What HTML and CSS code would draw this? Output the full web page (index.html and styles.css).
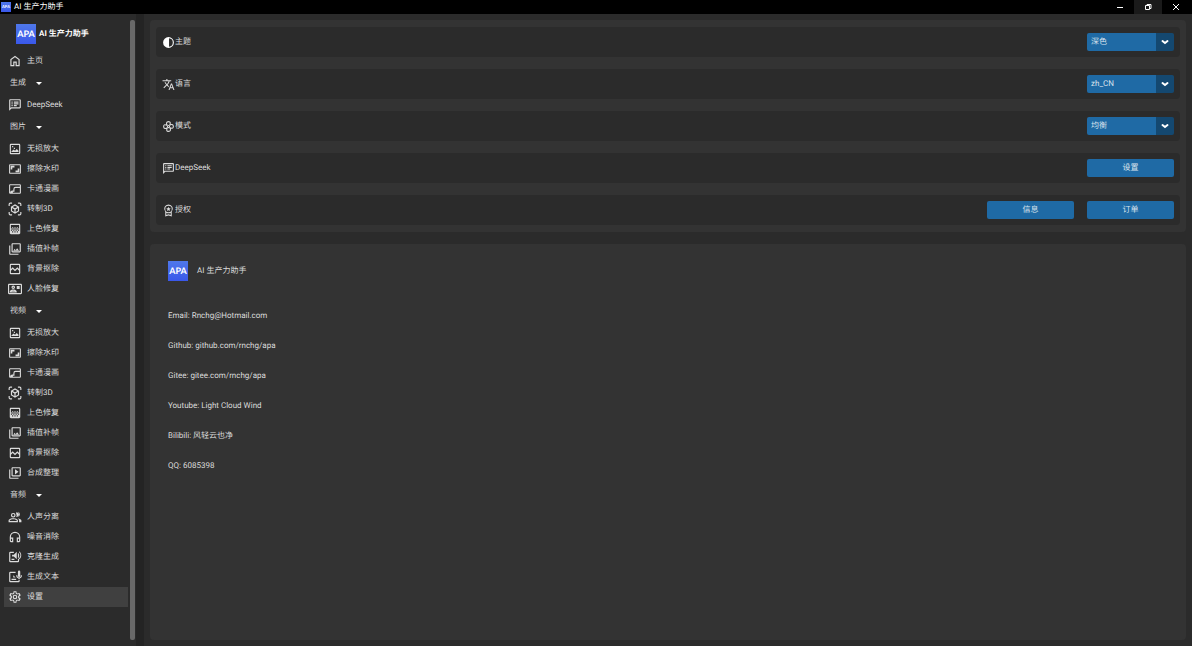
FILE: index.html
```html
<!DOCTYPE html>
<html lang="zh-CN">
<head>
    <meta charset="UTF-8">
    <meta name="viewport" content="width=device-width, initial-scale=1.0">
    <title>AI 生产力助手</title>
    <link rel="stylesheet" href="styles.css">
</head>
<body>
    <svg class="sprite" aria-hidden="true">
        <symbol id="i-home" viewBox="0 0 24 24"><path d="M6 19h3v-6h6v6h3v-9l-6-4.500L6 10v9zm-2 2V9l8-6 8 6v12h-7v-6h-2v6H4z"/></symbol>
        <symbol id="i-chat" viewBox="0 0 24 24"><path d="M4 4h16v12H5.170L4 17.170V4m0-2c-1.100 0-1.990.9-1.990 2L2 22l4-4h14c1.100 0 2-.9 2-2V4c0-1.100-.9-2-2-2H4zm2 10h2v2H6v-2zm0-3h2v2H6V9zm0-3h2v2H6V6zm4 6h5v2h-5v-2zm0-3h8v2h-8V9zm0-3h8v2h-8V6z"/></symbol>
        <symbol id="i-image" viewBox="0 0 24 24"><path d="M19 5v14H5V5h14m0-2H5a2 2 0 0 0-2 2v14a2 2 0 0 0 2 2h14a2 2 0 0 0 2-2V5a2 2 0 0 0-2-2zM6 17h12v-2l-3-3-3 3-2-2-4 3zM7 7h2v2H7zm3 3h2v2h-2z"/></symbol>
        <symbol id="i-aspect" viewBox="-1 -1 26 26"><path d="M20 11h-3v4h-4v3h7zM7 9h4V6H4v7h3V9zm14-6H3c-1.100 0-2 .9-2 2v14c0 1.100.9 2 2 2h18c1.100 0 2-.9 2-2V5c0-1.100-.9-2-2-2zm0 16H3V5h18v14z"/></symbol>
        <symbol id="i-curve" viewBox="-1 -1 26 26"><path d="M21 3H3a2 2 0 0 0-2 2v14a2 2 0 0 0 2 2h18a2 2 0 0 0 2-2V5a2 2 0 0 0-2-2zM3 19V5h18v3h-8a4 4 0 0 0-4 4v3H7a4 4 0 0 0-4 4zm18 0H8v-2h3v-5a2 2 0 0 1 2-2h8v9z"/></symbol>
        <symbol id="i-cube" viewBox="0 0 24 24"><path d="M3 7V4a1 1 0 0 1 1-1h3V1H4a3 3 0 0 0-3 3v3zM17 3h3a1 1 0 0 1 1 1v3h2V4a3 3 0 0 0-3-3h-3zM7 21H4a1 1 0 0 1-1-1v-3H1v3a3 3 0 0 0 3 3h3zM21 17v3a1 1 0 0 1-1 1h-3v2h3a3 3 0 0 0 3-3v-3zM19 8l-7-4-7 4v8l7 4 7-4zm-7-1.700 4 2.300-4 2.300-4-2.300zm-5 4.100 4 2.300v4.500l-4-2.300zm6 6.800v-4.500l4-2.300v4.500z"/></symbol>
        <symbol id="i-gradient" viewBox="0 0 24 24"><path d="M11 9h2v2h-2zm-2 2h2v2H9zm4 0h2v2h-2zm2-2h2v2h-2zM7 9h2v2H7zm12-6H5c-1.100 0-2 .9-2 2v14c0 1.100.9 2 2 2h14c1.100 0 2-.9 2-2V5c0-1.100-.9-2-2-2zM9 18H7v-2h2v2zm4 0h-2v-2h2v2zm4 0h-2v-2h2v2zm2-7h-2v2h2v2h-2v-2h-2v2h-2v-2h-2v2H9v-2H7v2H5v-2h2v-2H5V5h14v6z"/></symbol>
        <symbol id="i-library" viewBox="0 0 24 24"><path d="M20 4v12H8V4h12m0-2H8c-1.100 0-2 .9-2 2v12c0 1.100.9 2 2 2h12c1.100 0 2-.9 2-2V4c0-1.100-.9-2-2-2zm-8.500 9.670 1.690 2.260 2.480-3.100L19 15H9zM2 6v14c0 1.100.9 2 2 2h14v-2H4V6H2z"/></symbol>
        <symbol id="i-cutout" viewBox="0 0 24 24"><path d="M19 3H5a2 2 0 0 0-2 2v14a2 2 0 0 0 2 2h14a2 2 0 0 0 2-2V5a2 2 0 0 0-2-2zm0 16H5v-4l3-3 4 4 4-4 3 3v4zm0-7-3-3-4 4-4-4-3 3V5h14v7z"/></symbol>
        <symbol id="i-face" viewBox="0 0 24 24"><path d="M22 3H2C.9 3 0 3.900 0 5v14c0 1.100.9 2 2 2h20c1.100 0 2-.9 2-2V5c0-1.100-.9-2-2-2zm0 16H2V5h20v14zM9 12c1.700 0 3-1.300 3-3S10.700 6 9 6 6 7.300 6 9s1.300 3 3 3zm0-4a1 1 0 1 1 0 2 1 1 0 0 1 0-2zm6 8.600c0-2.500-4-3.600-6-3.600s-6 1.100-6 3.600V18h12v-1.400zM5.500 16c.7-.6 2.200-1 3.500-1s2.800.4 3.500 1h-7zM15 7h5v5h-5z"/></symbol>
        <symbol id="i-video" viewBox="0 0 24 24"><path d="M4 6H2v14c0 1.100.9 2 2 2h14v-2H4V6zm16-4H8c-1.100 0-2 .9-2 2v12c0 1.100.9 2 2 2h12c1.100 0 2-.9 2-2V4c0-1.100-.9-2-2-2zm0 14H8V4h12v12zM12 5.500v9l6-4.500z"/></symbol>
        <symbol id="i-voices" viewBox="0 0 24 24"><path d="M9 5a4 4 0 1 0 0 8 4 4 0 0 0 0-8zm0 2a2 2 0 1 1 0 4 2 2 0 0 1 0-4zm0 7c-3 0-8 1.300-8 4v3h16v-3c0-2.700-5-4-8-4zm-6 5v-1c0-.7 3-2 6-2s6 1.300 6 2v1zM14 4a4 4 0 0 1 0 8l1-3-1-2zM17 14c3 1 6 2 6 4v3h-4v-3c0-2-1-3-2-4zM18 3c3 2 3 7 0 9z"/></symbol>
        <symbol id="i-headphones" viewBox="0 0 24 24"><path d="M12 3a9 9 0 0 0-9 9v7c0 1.100.9 2 2 2h4v-8H5v-1a7 7 0 0 1 14 0v1h-4v8h4c1.100 0 2-.9 2-2v-7a9 9 0 0 0-9-9zM7 15v4H5v-4h2zm12 4h-2v-4h2v4z"/></symbol>
        <symbol id="i-clone" viewBox="0 0 24 24"><path d="M10 3H4a2 2 0 0 0-2 2v14a2 2 0 0 0 2 2h13a2 2 0 0 0 2-2v-4h-2v4H4V5h6zM7 8h3l5-5v13l-5-5H7zM17 5c3 1 3 8 0 9zM19 2c5 3 5 11 0 14v-2c3-2 3-8 0-10zM6 15h5v2H6z"/></symbol>
        <symbol id="i-note" viewBox="0 0 24 24"><path d="M13 3H4a2 2 0 0 0-2 2v14a2 2 0 0 0 2 2h14a2 2 0 0 0 2-2v-3h-2v3H4V5h9zM17 3a2 2 0 0 1 4 0v7a2 2 0 0 1-4 0zM14 9h2c0 5 6 5 6 0h2c0 3-2 5-4 5.500V17h-2v-2.500C16 14 14 12 14 9zM6 15h8v2H6zM9 9l4 4H9z"/></symbol>
        <symbol id="i-gear" viewBox="0 0 24 24"><path d="M19.430 12.980c.04-.32.07-.64.07-.98s-.03-.66-.07-.98l2.110-1.650c.19-.15.24-.42.12-.64l-2-3.460c-.09-.16-.26-.25-.44-.25-.06 0-.12.010-.17.030l-2.490 1c-.52-.4-1.080-.73-1.690-.98l-.38-2.650C14.460 2.180 14.250 2 14 2h-4c-.25 0-.46.18-.49.42l-.38 2.650c-.61.25-1.170.59-1.690.98l-2.490-1c-.23-.09-.48 0-.61.22l-2 3.460c-.13.22-.07.49.12.64l2.110 1.650c-.04.32-.07.65-.07.98s.03.66.07.98l-2.110 1.650c-.19.15-.24.42-.12.64l2 3.460c.12.22.39.3.61.22l2.490-1c.52.4 1.080.73 1.690.98l.38 2.650c.03.24.24.42.49.42h4c.25 0 .46-.18.49-.42l.38-2.650c.61-.25 1.170-.59 1.690-.98l2.490 1c.23.09.48 0 .61-.22l2-3.460c.12-.22.07-.49-.12-.64l-2.110-1.650zM17.300 13.500l1.700 2-1 1.600-2.500-.9-2 1.300-.5 2.500h-2l-.5-2.500-2-1.300-2.500.9-1-1.600 1.700-2v-3L5 8.500l1-1.600 2.500.9 2-1.300L11 4h2l.5 2.500 2 1.300 2.500-.9 1 1.600-1.700 2zM12 8a4 4 0 1 0 0 8 4 4 0 0 0 0-8zm0 6a2 2 0 1 1 0-4 2 2 0 0 1 0 4z" fill-rule="evenodd"/></symbol>
        <symbol id="i-contrast" viewBox="0 0 24 24"><path d="M12 2a10 10 0 1 0 0 20 10 10 0 0 0 0-20zm1 2.070a8 8 0 0 1 0 15.860z"/></symbol>
        <symbol id="i-translate" viewBox="0 0 24 24"><path d="M12.870 15.070l-2.540-2.510.03-.03A17.520 17.520 0 0 0 14.070 6H17V4h-7V2H8v2H1v2h11.170C11.500 7.920 10.440 9.750 9 11.350 8.070 10.320 7.300 9.190 6.690 8h-2c.73 1.630 1.730 3.170 2.980 4.560l-5.090 5.020L4 19l5-5 3.110 3.110.76-2.040zM18.500 10h-2L12 22h2l1.120-3h4.750L21 22h2l-4.500-12zm-2.620 7l1.620-4.330L19.120 17h-3.240z"/></symbol>
        <symbol id="i-fan" viewBox="0 0 24 24"><g fill="none" stroke="currentColor" stroke-width="2"><path d="M10 10C7 7 8 3 12 3c4 0 4 3 2 7M14 10c3-3 7-2 7 2 0 4-3 4-7 2M14 14c3 3 2 7-2 7-4 0-4-3-2-7M10 14c-3 3-7 2-7-2 0-4 3-4 7-2"/><circle cx="12" cy="12" r="2"/></g></symbol>
        <symbol id="i-award" viewBox="0 0 24 24"><path d="M12 1a8 8 0 0 0-6 13.300V23l6-2 6 2v-8.700A8 8 0 0 0 12 1zm0 2a6 6 0 1 1 0 12 6 6 0 0 1 0-12zM8 16c2.500 1.300 5.500 1.300 8 0v4.200L12 19l-4 1.200zM12 5l1.200 2.700 2.800.3-2 2 .6 3-2.600-1.500L9.400 13l.6-3-2-2 2.800-.3z"/></symbol>
    </svg>

    <header class="titlebar">
        <span class="logo logo-small">APA</span>
        <span class="window-title">AI 生产力助手</span>
        <div class="window-controls">
            <button type="button" aria-label="最小化"><svg viewBox="0 0 8 8"><path d="M1 4.500h6"/></svg></button>
            <button type="button" class="hovered" aria-label="还原"><svg viewBox="0 0 8 8"><path d="M1.500 2.500h4v4h-4zM3 2.500v-1h4v4H5.500"/></svg></button>
            <button type="button" aria-label="关闭"><svg viewBox="0 0 8 8"><path d="M1 1l6 6M7 1L1 7"/></svg></button>
        </div>
    </header>

    <div class="layout">
        <aside class="sidebar">
            <div class="brand"><span class="logo">APA</span><strong>AI 生产力助手</strong></div>
            <nav>
                <a href="#home"><svg class="icon"><use href="#i-home"/></svg>主页</a>
                <button type="button" class="section">生成<span class="caret"></span></button>
                <a href="#deepseek"><svg class="icon"><use href="#i-chat"/></svg>DeepSeek</a>
                <button type="button" class="section">图片<span class="caret"></span></button>
                <a href="#image-upscale"><svg class="icon"><use href="#i-image"/></svg>无损放大</a>
                <a href="#image-watermark"><svg class="icon"><use href="#i-aspect"/></svg>擦除水印</a>
                <a href="#image-cartoon"><svg class="icon"><use href="#i-curve"/></svg>卡通漫画</a>
                <a href="#image-3d"><svg class="icon"><use href="#i-cube"/></svg>转制3D</a>
                <a href="#image-color"><svg class="icon"><use href="#i-gradient"/></svg>上色修复</a>
                <a href="#image-frame"><svg class="icon"><use href="#i-library"/></svg>插值补帧</a>
                <a href="#image-matting"><svg class="icon"><use href="#i-cutout"/></svg>背景抠除</a>
                <a href="#image-face"><svg class="icon"><use href="#i-face"/></svg>人脸修复</a>
                <button type="button" class="section">视频<span class="caret"></span></button>
                <a href="#video-upscale"><svg class="icon"><use href="#i-image"/></svg>无损放大</a>
                <a href="#video-watermark"><svg class="icon"><use href="#i-aspect"/></svg>擦除水印</a>
                <a href="#video-cartoon"><svg class="icon"><use href="#i-curve"/></svg>卡通漫画</a>
                <a href="#video-3d"><svg class="icon"><use href="#i-cube"/></svg>转制3D</a>
                <a href="#video-color"><svg class="icon"><use href="#i-gradient"/></svg>上色修复</a>
                <a href="#video-frame"><svg class="icon"><use href="#i-library"/></svg>插值补帧</a>
                <a href="#video-matting"><svg class="icon"><use href="#i-cutout"/></svg>背景抠除</a>
                <a href="#video-merge"><svg class="icon"><use href="#i-video"/></svg>合成整理</a>
                <button type="button" class="section">音频<span class="caret"></span></button>
                <a href="#audio-split"><svg class="icon"><use href="#i-voices"/></svg>人声分离</a>
                <a href="#audio-denoise"><svg class="icon"><use href="#i-headphones"/></svg>噪音消除</a>
                <a href="#audio-clone"><svg class="icon"><use href="#i-clone"/></svg>克隆生成</a>
                <a href="#audio-text"><svg class="icon"><use href="#i-note"/></svg>生成文本</a>
                <a href="#settings" class="active"><svg class="icon"><use href="#i-gear"/></svg>设置</a>
            </nav>
        </aside>
        <div class="scrollbar"></div>

        <main>
            <section class="panel settings">
                <div class="row">
                    <label for="theme"><svg class="icon icon-bright"><use href="#i-contrast"/></svg>主题</label>
                    <div class="select"><select id="theme"><option>深色</option></select><svg viewBox="0 0 8 8"><path d="M1.500 3L4 5l2.500-2"/></svg></div>
                </div>
                <div class="row">
                    <label for="language"><svg class="icon"><use href="#i-translate"/></svg>语言</label>
                    <div class="select"><select id="language"><option>zh_CN</option></select><svg viewBox="0 0 8 8"><path d="M1.500 3L4 5l2.500-2"/></svg></div>
                </div>
                <div class="row">
                    <label for="mode"><svg class="icon"><use href="#i-fan"/></svg>模式</label>
                    <div class="select"><select id="mode"><option>均衡</option></select><svg viewBox="0 0 8 8"><path d="M1.500 3L4 5l2.500-2"/></svg></div>
                </div>
                <div class="row">
                    <label for="deepseek-setup"><svg class="icon"><use href="#i-chat"/></svg>DeepSeek</label>
                    <button type="button" class="btn" id="deepseek-setup">设置</button>
                </div>
                <div class="row">
                    <label for="license-info"><svg class="icon"><use href="#i-award"/></svg>授权</label>
                    <div class="actions">
                        <button type="button" class="btn" id="license-info">信息</button>
                        <button type="button" class="btn">订单</button>
                    </div>
                </div>
            </section>

            <section class="panel about">
                <div class="about-title"><span class="logo">APA</span>AI 生产力助手</div>
                <p>Email: Rnchg@Hotmail.com</p>
                <p>Github: github.com/rnchg/apa</p>
                <p>Gitee: gitee.com/rnchg/apa</p>
                <p>Youtube: Light Cloud Wind</p>
                <p>Bilibili: 风轻云也净</p>
                <p>QQ: 6085398</p>
            </section>
        </main>
    </div>
</body>
</html>
```

FILE: styles.css
```css
* {
    box-sizing: border-box;
}
body {
    margin: 0;
    min-height: 100vh;
    display: flex;
    flex-direction: column;
    background-color: #242424;
    color: #dcdcdc;
    font-family: Roboto, "Noto Sans CJK SC", sans-serif;
    font-size: 8px;
    line-height: 12px;
    text-rendering: geometricPrecision;
}
button, select {
    font: inherit;
    color: inherit;
    text-rendering: inherit;
    border: none;
    margin: 0;
    padding: 0;
}
.sprite {
    display: none;
}
.icon {
    width: 14px;
    height: 14px;
    flex: none;
    fill: currentColor;
}
.icon-bright {
    color: #fff;
}
.logo {
    display: flex;
    align-items: center;
    justify-content: center;
    width: 20px;
    height: 20px;
    flex: none;
    background: linear-gradient(#4f78ea, #3a58ea);
    color: #fff;
    font-family: Lato, sans-serif;
    font-size: 9px;
    font-weight: bold;
}
.logo-small {
    width: 10px;
    height: 10px;
    font-size: 4px;
}

/* title bar */
.titlebar {
    display: flex;
    align-items: center;
    gap: 3px;
    height: 14px;
    padding: 0 2px 0 1px;
    background-color: #000;
    color: #fff;
}
.window-controls {
    display: flex;
    align-self: stretch;
    margin-left: auto;
}
.window-controls button {
    display: flex;
    align-items: center;
    justify-content: center;
    width: 28px;
    background-color: transparent;
}
.window-controls .hovered {
    background-color: #1a1a1a;
}
.window-controls svg {
    width: 8px;
    height: 8px;
    fill: none;
    stroke: #fff;
}

.layout {
    display: flex;
    flex: 1;
}

/* sidebar */
.sidebar {
    width: 130px;
    padding: 10px 2px 0 4px;
    background-color: #2b2b2b;
}
.brand {
    display: flex;
    align-items: center;
    gap: 3px;
    padding-left: 12px;
    margin-bottom: 7px;
    color: #fff;
}
nav {
    display: flex;
    flex-direction: column;
}
nav a {
    display: flex;
    align-items: center;
    gap: 5px;
    height: 20px;
    padding-left: 4px;
    color: inherit;
    text-decoration: none;
}
nav .active {
    background-color: #404040;
}
.section {
    display: flex;
    align-items: center;
    gap: 10px;
    height: 24px;
    padding-left: 6px;
    background-color: transparent;
}
.caret {
    border: 3px solid transparent;
    border-top-color: #fff;
    border-bottom: none;
}
.scrollbar {
    width: 6px;
    padding: 6px 0;
    background-color: #2b2b2b;
}
.scrollbar::before {
    content: "";
    display: block;
    height: 100%;
    width: 5px;
    border-radius: 2px;
    background-color: #696969;
}

/* content */
main {
    flex: 1;
    display: flex;
    flex-direction: column;
    gap: 12px;
    margin-left: 8px;
    padding: 6px;
    background-color: #2b2b2b;
}
.panel {
    border-radius: 4px;
    background-color: #333;
}
.settings {
    display: flex;
    flex-direction: column;
    gap: 12px;
    padding: 7px 6px;
}
.row {
    display: flex;
    align-items: center;
    justify-content: space-between;
    height: 30px;
    padding: 0 6px;
    border-radius: 4px;
    background-color: #2b2b2b;
}
.row label {
    display: flex;
    align-items: center;
}
.row .icon {
    width: 13px;
    height: 13px;
}
.actions {
    display: flex;
    gap: 13px;
}
.btn {
    width: 87px;
    height: 18px;
    border-radius: 2px;
    background-color: #1f6aa5;
    color: #dce4ee;
}
.select {
    display: grid;
    grid-template-columns: 1fr 18px;
    align-items: center;
    justify-items: center;
    width: 87px;
    height: 18px;
}
.select select {
    grid-area: 1 / 1 / 2 / 3;
    width: 100%;
    height: 100%;
    padding: 0 21px 0 4px;
    appearance: none;
    border-radius: 2px;
    background: linear-gradient(to left, #144870 18px, #1f6aa5 18px);
    color: #dce4ee;
}
.select svg {
    grid-area: 1 / 2;
    width: 8px;
    height: 8px;
    fill: none;
    stroke: #fff;
    stroke-width: 2;
    stroke-linecap: round;
    pointer-events: none;
}
.about {
    flex: 1;
    padding: 17px 18px;
}
.about-title {
    display: flex;
    align-items: center;
    gap: 9px;
    margin-bottom: 20px;
}
.about p {
    margin: 0;
    line-height: 30px;
}
```
